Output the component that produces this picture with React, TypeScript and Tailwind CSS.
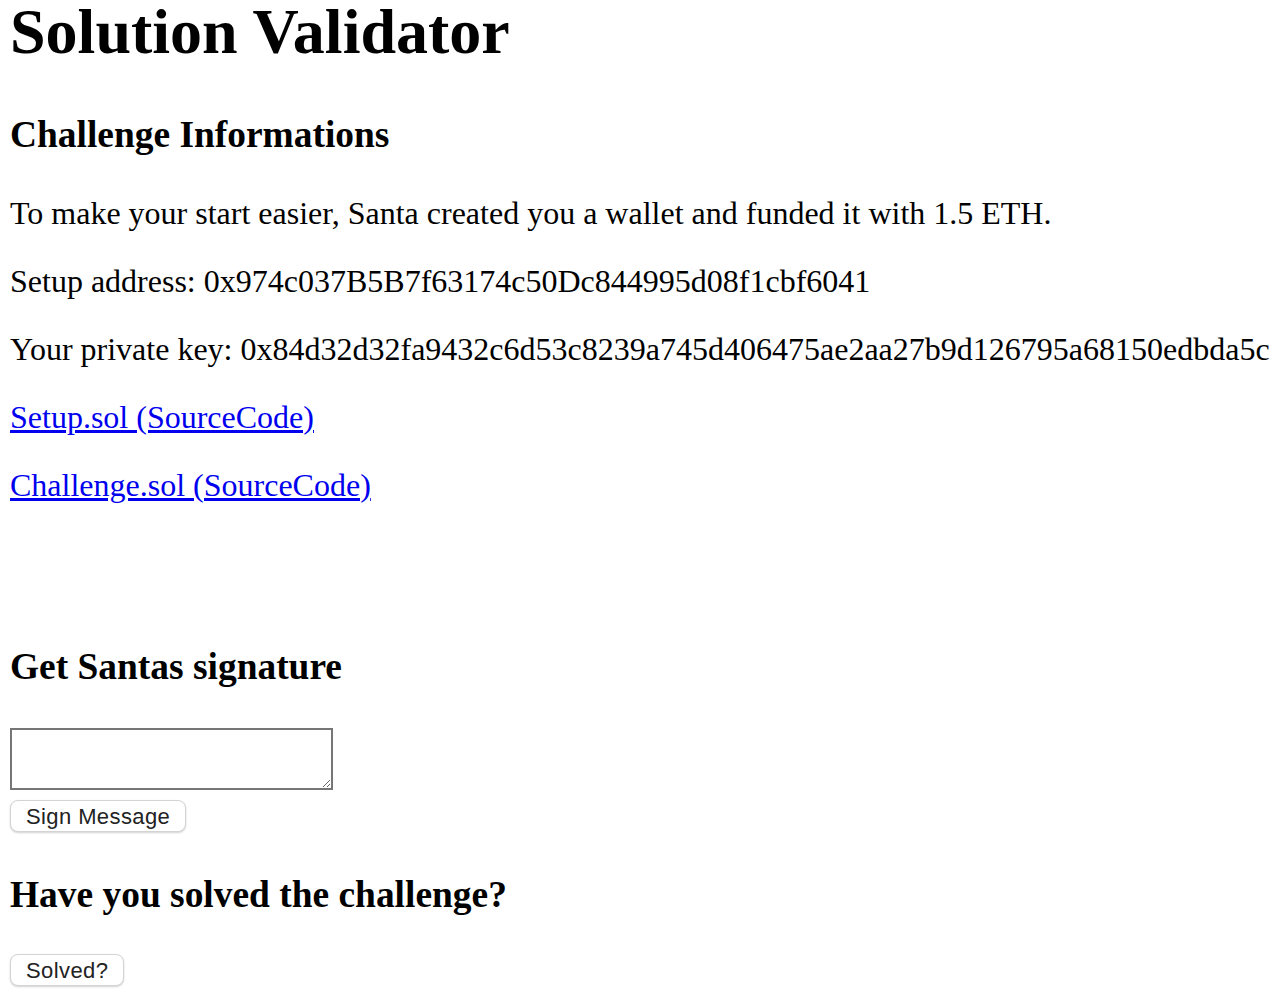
export default function App() {
  return (
    <div className="min-h-screen bg-white pl-[10px] font-['Liberation_Serif',serif] text-black">
      <h1 className="text-[64px] leading-[64px] font-bold">Solution Validator</h1>

      <h3 className="mt-[49.4px] text-[37.44px] leading-[44px] font-bold">Challenge Informations</h3>
      <p className="mt-[37.3px] text-[32px] leading-[36px] whitespace-nowrap">
        To make your start easier, Santa created you a wallet and funded it with 1.5 ETH.
      </p>
      <p className="mt-[32px] text-[32px] leading-[36px] whitespace-nowrap">
        Setup address: 0x974c037B5B7f63174c50Dc844995d08f1cbf6041
      </p>
      <p className="mt-[32px] text-[32px] leading-[36px] whitespace-nowrap">
        Your private key: 0x84d32d32fa9432c6d53c8239a745d406475ae2aa27b9d126795a68150edbda5c
      </p>
      <p className="mt-[32px] text-[32px] leading-[36px]">
        <a href="#" className="text-[#0000ee] underline">Setup.sol (SourceCode)</a>
      </p>
      <p className="mt-[32px] text-[32px] leading-[36px]">
        <a href="#" className="text-[#0000ee] underline">Challenge.sol (SourceCode)</a>
      </p>

      <h3 className="mt-[142.7px] text-[37.44px] leading-[44px] font-bold">Get Santas signature</h3>
      <textarea className="mt-[38.3px] block h-[62px] w-[323px] border-2 border-[#767676] bg-white" />
      <button className="mt-[10px] block h-[32px] rounded-[8px] border border-[#d4d4d4] bg-white px-[15px] pt-[1px] font-['Liberation_Sans',sans-serif] text-[22px] leading-[29px] tracking-[0.4px] text-[#222] shadow-[0_1px_2px_rgba(0,0,0,0.18)]">
        Sign Message
      </button>

      <h3 className="mt-[41px] text-[37.44px] leading-[44px] font-bold">Have you solved the challenge?</h3>
      <button className="mt-[37px] block h-[32px] rounded-[8px] border border-[#d4d4d4] bg-white px-[15px] pt-[1px] font-['Liberation_Sans',sans-serif] text-[22px] leading-[29px] tracking-[0.4px] text-[#222] shadow-[0_1px_2px_rgba(0,0,0,0.18)]">
        Solved?
      </button>
    </div>
  );
}
